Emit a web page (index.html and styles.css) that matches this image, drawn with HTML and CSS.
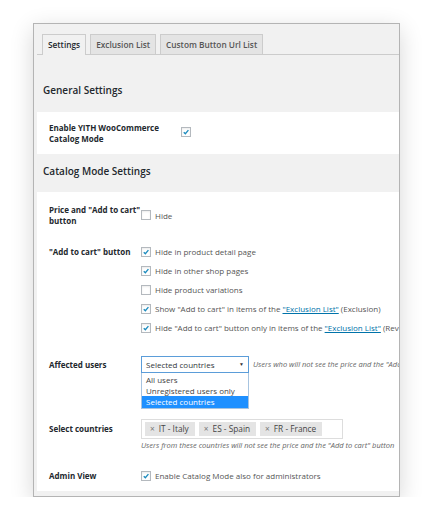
FILE: index.html
```html
<!DOCTYPE html>
<html>
<head>
<meta charset="utf-8">
<link rel="stylesheet" href="styles.css">
</head>
<body>
<div class="window">
  <div class="tabs">
    <div class="tab tab-active">Settings</div>
    <div class="tab">Exclusion List</div>
    <div class="tab">Custom Button Url List</div>
  </div>

  <h3 class="heading heading-first">General Settings</h3>
  <div class="section section-general">
    <div class="row row-center">
      <div class="label label-wide">Enable YITH WooCommerce Catalog Mode</div>
      <div class="field">
        <span class="cb cb-on"><svg viewBox="0 0 10 10"><path d="M2.2 5.2 L4.2 7.2 L8 2.6" /></svg></span>
      </div>
    </div>
  </div>

  <h3 class="heading">Catalog Mode Settings</h3>
  <div class="section section-catalog">
    <div class="row row-price">
      <div class="label">Price and "Add to cart" button</div>
      <div class="field">
        <label class="opt"><span class="cb"></span>Hide</label>
      </div>
    </div>

    <div class="row row-cart">
      <div class="label">"Add to cart" button</div>
      <div class="field opts">
        <label class="opt"><span class="cb cb-on"><svg viewBox="0 0 10 10"><path d="M2.2 5.2 L4.2 7.2 L8 2.6" /></svg></span>Hide in product detail page</label>
        <label class="opt"><span class="cb cb-on"><svg viewBox="0 0 10 10"><path d="M2.2 5.2 L4.2 7.2 L8 2.6" /></svg></span>Hide in other shop pages</label>
        <label class="opt"><span class="cb"></span>Hide product variations</label>
        <label class="opt"><span class="cb cb-on"><svg viewBox="0 0 10 10"><path d="M2.2 5.2 L4.2 7.2 L8 2.6" /></svg></span>Show "Add to cart" in items of the&nbsp;<a class="link">"Exclusion List"</a>&nbsp;(Exclusion)</label>
        <label class="opt"><span class="cb cb-on"><svg viewBox="0 0 10 10"><path d="M2.2 5.2 L4.2 7.2 L8 2.6" /></svg></span>Hide "Add to cart" button only in items of the&nbsp;<a class="link">"Exclusion List"</a>&nbsp;(Reverse Exclusion)</label>
      </div>
    </div>

    <div class="row row-users">
      <div class="label">Affected users</div>
      <div class="field field-inline">
        <div class="select-wrap">
          <div class="select">Selected countries<span class="arrow">▼</span></div>
          <ul class="dropdown">
            <li>All users</li>
            <li>Unregistered users only</li>
            <li class="selected">Selected countries</li>
          </ul>
        </div>
        <span class="hint hint-inline">Users who will not see the price and the "Add to cart" button</span>
      </div>
    </div>

    <div class="row row-countries">
      <div class="label">Select countries</div>
      <div class="field">
        <div class="tagbox">
          <span class="tag"><span class="x">×</span>IT - Italy</span>
          <span class="tag"><span class="x">×</span>ES - Spain</span>
          <span class="tag"><span class="x">×</span>FR - France</span>
        </div>
        <div class="hint">Users from these countries will not see the price and the "Add to cart" button</div>
      </div>
    </div>

    <div class="row row-admin">
      <div class="label">Admin View</div>
      <div class="field">
        <label class="opt"><span class="cb cb-on"><svg viewBox="0 0 10 10"><path d="M2.2 5.2 L4.2 7.2 L8 2.6" /></svg></span>Enable Catalog Mode also for administrators</label>
      </div>
    </div>
  </div>
</div>
</body>
</html>
```

FILE: styles.css
```css
* { box-sizing: border-box; }
html, body { margin: 0; padding: 0; background: #fff; }
body {
  font-family: "Open Sans", "Noto Sans", sans-serif;
  font-size: 8px;
  color: #555;
}
.window {
  margin: 23px 0 0 33px;
  width: 367px;
  height: 474px;
  border: 1px solid #b4b4b4;
  background: #f1f1f1;
  overflow: hidden;
  box-shadow: 0 6px 22px rgba(0, 0, 0, 0.16);
  padding: 0 0 0 3px;
}
.tabs {
  display: flex;
  gap: 4px;
  padding: 10px 0 0 5px;
  border-bottom: 1px solid #cccccc;
  height: 31px;
  width: 600px;
}
.tab {
  height: 20px;
  padding: 0 5px;
  border: 1px solid #cccccc;
  border-bottom: none;
  background: #e4e4e4;
  font-weight: 600;
  font-size: 8.3px;
  color: #555;
  line-height: 19px;
  white-space: nowrap;
}
.tab-active {
  background: #f1f1f1;
  color: #23282d;
  height: 21px;
  margin-bottom: -1px;
}
.heading {
  margin: 0;
  font-size: 10px;
  font-weight: 600;
  color: #23282d;
  line-height: 14px;
  padding: 28px 0 15px 6px;
}
.section {
  background: #fff;
  width: 600px;
  padding: 0 0 0 12px;
}
.section-general { padding-top: 10px; padding-bottom: 10px; }
.section-catalog { padding-top: 12px; padding-bottom: 10px; }
.section-general + .heading { padding-top: 10px; padding-bottom: 14px; }
.row {
  display: flex;
  align-items: flex-start;
}
.row-center { align-items: center; }
.label {
  width: 92px;
  flex: none;
  font-weight: 700;
  color: #23282d;
  line-height: 11px;
}
.label-wide { width: 132px; padding-right: 20px; }
.field { line-height: 11px; white-space: nowrap; }
.row-price { align-items: center; }
.row-cart { margin-top: 20px; }
.opts { display: flex; flex-direction: column; gap: 8px; }
.opt { display: flex; align-items: center; }
.cb {
  display: inline-block;
  width: 10px;
  height: 10px;
  border: 1px solid #b4b9be;
  background: #fff;
  margin-right: 4px;
  flex: none;
  box-shadow: inset 0 1px 2px rgba(0,0,0,0.08);
}
.cb svg { display: block; width: 8px; height: 8px; }
.cb svg path { fill: none; stroke: #1e8cbe; stroke-width: 1.7; }
.link { color: #0073aa; text-decoration: underline; }
.row-users { margin-top: 23px; align-items: center; }
.field-inline { display: flex; align-items: center; }
.select-wrap { position: relative; }
.select {
  width: 108px;
  height: 17px;
  border: 1px solid #5b9dd9;
  background: #fff;
  color: #32373c;
  padding: 0 4px;
  line-height: 15px;
  position: relative;
}
.arrow {
  position: absolute;
  right: 4px;
  top: 0;
  font-size: 5px;
  color: #333;
}
.dropdown {
  position: absolute;
  left: 0;
  top: 17px;
  width: 108px;
  margin: 0;
  padding: 1px 0 0;
  list-style: none;
  background: #fff;
  border: 1px solid #a7c4e0;
  border-top: none;
  color: #444;
  z-index: 2;
}
.dropdown li { padding: 0 4px; line-height: 11px; height: 11px; }
.dropdown li.selected { background: #1e90ff; color: #fff; height: 12px; line-height: 12px; }
.hint { font-style: italic; color: #666; font-size: 7.5px; line-height: 11px; }
.hint-inline { margin-left: 4px; }
.row-countries { margin-top: 46px; align-items: flex-start; }
.row-countries .label { padding-top: 4px; }
.tagbox {
  width: 202px;
  height: 20px;
  border: 1px solid #dddddd;
  background: #fff;
  padding: 2px 3px;
  display: flex;
  gap: 4px;
}
.tag {
  background: #e4e4e4;
  color: #444;
  height: 14px;
  line-height: 14px;
  padding: 0 6px 0 5px;
  font-size: 8.3px;
}
.tag .x { color: #777; margin-right: 4px; }
.row-countries .hint { margin-top: 1px; }
.row-admin { margin-top: 19px; align-items: center; }
```
